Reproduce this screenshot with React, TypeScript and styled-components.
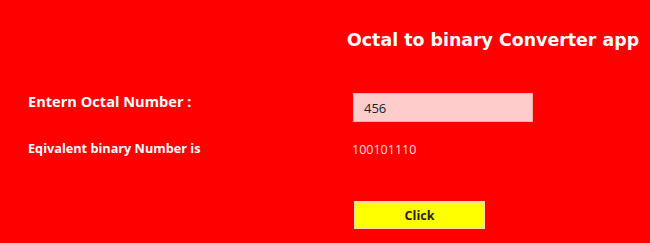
import React, { useState } from "react";
import styled, { createGlobalStyle } from "styled-components";

const Global = createGlobalStyle`
  html, body { margin: 0; padding: 0; background: #ff0000; }
  body { width: 650px; height: 243px; overflow: hidden; }
`;

const Page = styled.div`
  width: 650px;
  height: 243px;
  background: #ff0000;
  display: grid;
  grid-template-columns: 324px 1fr;
  grid-template-rows: 24px 41px 29px 15px 24px 40px 28px;
  padding: 28px 0 0 28px;
  box-sizing: border-box;
  font-family: "Open Sans", "Noto Sans", sans-serif;
`;

const Title = styled.h1`
  grid-column: 2;
  grid-row: 1;
  align-self: center;
  margin: 0 0 0 -5px;
  font-family: "DejaVu Sans", "Liberation Sans", sans-serif;
  font-weight: bold;
  font-size: 17.4px;
  line-height: 24px;
  color: #ffffff;
  white-space: nowrap;
`;

const Label = styled.label<{ $row: number; $size: number }>`
  grid-column: 1;
  grid-row: ${(p) => p.$row};
  align-self: start;
  line-height: 16px;
  margin-top: ${(p) => (p.$row === 3 ? 0 : 3)}px;
  font-weight: 700;
  font-size: ${(p) => p.$size}px;
  color: #ffffff;
  white-space: nowrap;
`;

const Input = styled.input`
  grid-column: 2;
  grid-row: 3;
  width: 180px;
  height: 29px;
  box-sizing: border-box;
  margin: 0 0 0 1px;
  border: 1px solid #f0b0b0;
  background: #ffcccc;
  padding: 0 0 0 10px;
  font-family: "Open Sans", "Noto Sans", sans-serif;
  font-size: 13px;
  color: #222222;
  outline: none;
`;

const Value = styled.div`
  grid-column: 2;
  grid-row: 5;
  align-self: center;
  font-size: 12.5px;
  color: #ffdede;
`;

const Button = styled.button`
  grid-column: 2;
  grid-row: 7;
  margin-left: 2px;
  width: 131px;
  height: 28px;
  box-sizing: border-box;
  background: #ffff00;
  border: 2px solid #f4e0a0;
  font-family: "Open Sans", "Noto Sans", sans-serif;
  font-weight: 700;
  font-size: 12.5px;
  color: #222222;
  cursor: pointer;
  padding: 0;
`;

function octToBin(s: string): string {
  if (!/^[0-7]+$/.test(s)) return "";
  return parseInt(s, 8).toString(2);
}

export default function App() {
  const [oct, setOct] = useState("456");
  const [bin, setBin] = useState("100101110");
  return (
    <>
      <Global />
      <Page>
        <Title>Octal to binary Converter app</Title>
        <Label $row={3} $size={14.6}>Entern Octal Number :</Label>
        <Input value={oct} onChange={(e) => setOct(e.target.value)} />
        <Label $row={5} $size={12.7}>Eqivalent binary Number is</Label>
        <Value>{bin}</Value>
        <Button onClick={() => setBin(octToBin(oct))}>Click</Button>
      </Page>
    </>
  );
}
